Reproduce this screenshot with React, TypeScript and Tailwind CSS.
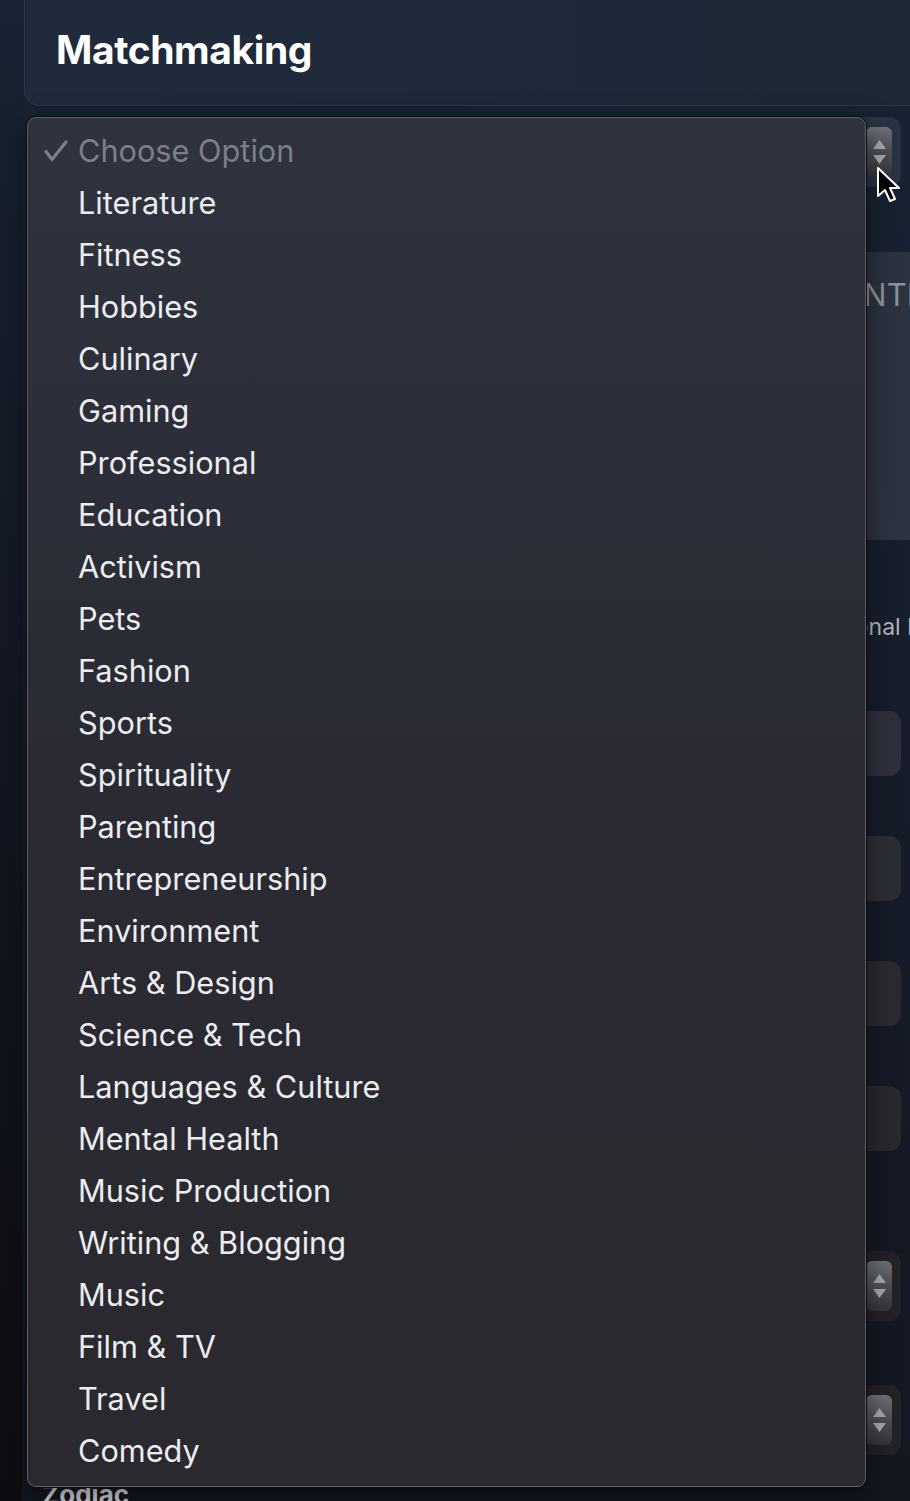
import React from "react";

const options = [
  "Literature",
  "Fitness",
  "Hobbies",
  "Culinary",
  "Gaming",
  "Professional",
  "Education",
  "Activism",
  "Pets",
  "Fashion",
  "Sports",
  "Spirituality",
  "Parenting",
  "Entrepreneurship",
  "Environment",
  "Arts & Design",
  "Science & Tech",
  "Languages & Culture",
  "Mental Health",
  "Music Production",
  "Writing & Blogging",
  "Music",
  "Film & TV",
  "Travel",
  "Comedy",
];

function Stepper() {
  return (
    <div className="w-[26px] h-[50px] rounded-[6px] bg-gradient-to-b from-[#6e7178] via-[#4c4f56] to-[#33353b] flex flex-col items-center justify-center gap-[4px]">
      <svg width="15" height="11" viewBox="0 0 15 11">
        <path d="M7.5 1 L14 10 L1 10 Z" fill="#a7a9ae" />
      </svg>
      <svg width="15" height="11" viewBox="0 0 15 11">
        <path d="M1 1 L14 1 L7.5 10 Z" fill="#a7a9ae" />
      </svg>
    </div>
  );
}

function SelectBox({ className }: { className: string }) {
  return (
    <div
      className={`${className} ml-[8px] h-[70px] rounded-xl flex items-center justify-end pr-[9px]`}
    >
      <Stepper />
    </div>
  );
}

function InputBox({ className }: { className: string }) {
  return <div className={`${className} ml-[8px] h-[65px] rounded-xl`} />;
}

function App() {
  return (
    <div
      className="relative h-[1501px] overflow-hidden bg-gradient-to-b from-[#182333] via-[#131722] to-[#0e0e12]"
      style={{ fontFamily: "Inter, 'Noto Sans', sans-serif" }}
    >
      <div className="pl-[24px]">
        <div className="h-[106px] bg-gradient-to-r from-[#1f2a3b] to-[#1d2837] border-b border-l border-[#2b3647] rounded-bl-2xl flex items-center pl-[31px] pb-[4px]">
          <h1 className="text-[39px] font-bold text-white tracking-[-0.4px]">
            Matchmaking
          </h1>
        </div>
      </div>

      <div className="ml-[22px] pr-[9px] bg-[#1b2636]/40">
        <div className="pt-[11px]">
          <SelectBox className="bg-[#283344]" />
        </div>

        <div className="mt-[65px] ml-[8px] mr-[-9px] h-[288px] bg-gradient-to-b from-[#2b3341] to-[#2d3340] pt-[20px]">
          <p className="pl-[784px] text-[31px] text-[#8b9099] uppercase whitespace-nowrap">
            Identity
          </p>
        </div>

        <p className="mt-[70px] pl-[784px] text-[23px] text-[#b4b6bb] whitespace-nowrap">
          Personal Information
        </p>

        <div className="mt-[66px] flex flex-col gap-[60px]">
          <InputBox className="bg-[#2e313d]" />
          <InputBox className="bg-[#2c2e36]" />
          <InputBox className="bg-[#2a2a30]" />
          <InputBox className="bg-[#29292e]" />
        </div>

        <div className="mt-[100px] flex flex-col gap-[64px]">
          <SelectBox className="bg-[#222227]" />
          <SelectBox className="bg-[#222227]" />
        </div>

        <p className="mt-[20px] pl-[20px] text-[26px] font-bold text-[#dcdce0]">
          Zodiac
        </p>
      </div>

      {/* open dropdown list */}
      <div className="absolute left-[27px] top-[117px] w-[839px] h-[1370px] rounded-[9px] border border-[#5c5f68] shadow-[0_0_0_1px_#0b0d12,0_10px_30px_rgba(0,0,0,0.5)] bg-gradient-to-b from-[#2e333f] via-[#292a33] to-[#2a292f] pt-[7px]">
        <div className="h-[52px] flex items-center text-[#7b7f88] text-[30.7px]">
          <svg
            className="ml-[16px] mr-[10px]"
            width="24"
            height="22"
            viewBox="0 0 24 22"
          >
            <path
              d="M2 11.5 L8 19.5 L22 2"
              fill="none"
              stroke="#7b7f88"
              strokeWidth="3.2"
              strokeLinecap="round"
              strokeLinejoin="round"
            />
          </svg>
          <span>Choose Option</span>
        </div>
        {options.map((o) => (
          <div
            key={o}
            className="h-[52px] flex items-center pl-[50px] text-[30.7px] text-[#ececef]"
          >
            {o}
          </div>
        ))}
      </div>

      {/* mouse pointer */}
      <svg
        className="absolute left-[876px] top-[166px]"
        width="26"
        height="38"
        viewBox="0 0 26 38"
      >
        <path
          d="M2 2 L2 30 L9 24 L14 35 L19 33 L14 22 L23 22 Z"
          fill="#000"
          stroke="#fff"
          strokeWidth="2"
          strokeLinejoin="round"
        />
      </svg>
    </div>
  );
}

export default App;
